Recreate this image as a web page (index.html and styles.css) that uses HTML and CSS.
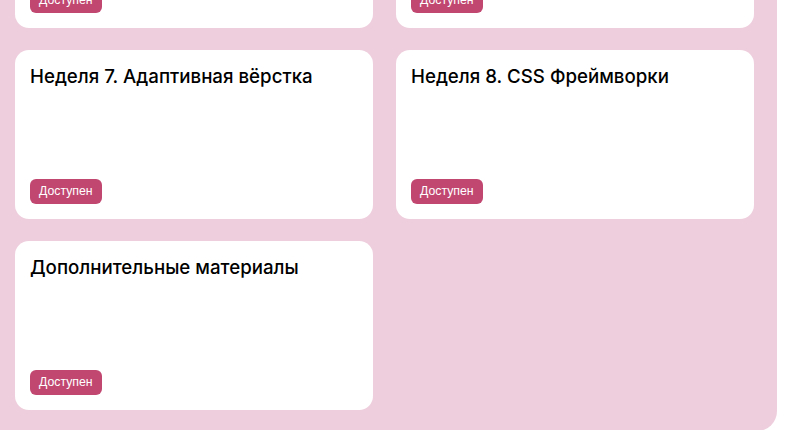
FILE: index.html
```html
<!DOCTYPE html>
<html lang="ru">
<head>
<meta charset="utf-8">
<title>Курс</title>
<link rel="stylesheet" href="styles.css">
</head>
<body>
<main class="board">
  <div class="grid">
    <article class="card">
      <h3 class="card-title">Неделя 5. Flexbox</h3>
      <span class="badge">Доступен</span>
    </article>
    <article class="card">
      <h3 class="card-title">Неделя 6. Grid</h3>
      <span class="badge">Доступен</span>
    </article>
    <article class="card">
      <h3 class="card-title">Неделя 7. Адаптивная вёрстка</h3>
      <span class="badge">Доступен</span>
    </article>
    <article class="card">
      <h3 class="card-title">Неделя 8. CSS Фреймворки</h3>
      <span class="badge">Доступен</span>
    </article>
    <article class="card">
      <h3 class="card-title">Дополнительные материалы</h3>
      <span class="badge">Доступен</span>
    </article>
  </div>
</main>
</body>
</html>
```
FILE: styles.css
```css
html, body {
  margin: 0;
  padding: 0;
  background: #ffffff;
  overflow: hidden;
}
body {
  font-family: Inter, "Noto Sans", sans-serif;
}
.board {
  width: 777px;
  background: #eecedd;
  border-bottom-right-radius: 20px;
  margin-top: -141px;
  padding: 0 23px 21px 15px;
  box-sizing: border-box;
}
.grid {
  display: grid;
  grid-template-columns: 358px 358px;
  column-gap: 23px;
  row-gap: 22px;
}
.card {
  background: #ffffff;
  border-radius: 14px;
  height: 169px;
  box-sizing: border-box;
  padding: 15px;
  display: flex;
  flex-direction: column;
  justify-content: space-between;
  align-items: flex-start;
}
.card-title {
  margin: 0;
  font-size: 18.7px;
  line-height: 24px;
  font-weight: 500;
  color: #000000;
}
.badge {
  display: inline-block;
  background: #c14771;
  color: #ffffff;
  font-family: "Liberation Sans", Arial, sans-serif;
  font-size: 12.3px;
  line-height: 25px;
  height: 25px;
  padding: 0 9px;
  border-radius: 6px;
}
```
